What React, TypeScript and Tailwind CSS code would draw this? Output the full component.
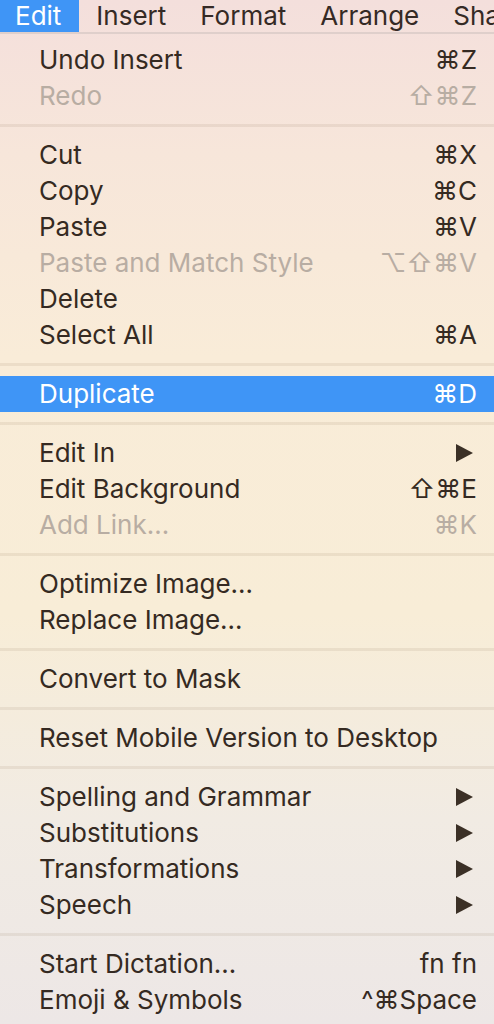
import React from "react";

type Item = {
  label: string
  shortcut?: string
  disabled?: boolean
  active?: boolean
  submenu?: boolean
}

const GROUPS: Item[][] = [
  [
    { label: "Undo Insert", shortcut: "⌘Z" },
    { label: "Redo", shortcut: "⇧⌘Z", disabled: true },
  ],
  [
    { label: "Cut", shortcut: "⌘X" },
    { label: "Copy", shortcut: "⌘C" },
    { label: "Paste", shortcut: "⌘V" },
    { label: "Paste and Match Style", shortcut: "⌥⇧⌘V", disabled: true },
    { label: "Delete" },
    { label: "Select All", shortcut: "⌘A" },
  ],
  [{ label: "Duplicate", shortcut: "⌘D", active: true }],
  [
    { label: "Edit In", submenu: true },
    { label: "Edit Background", shortcut: "⇧⌘E" },
    { label: "Add Link…", shortcut: "⌘K", disabled: true },
  ],
  [
    { label: "Optimize Image…" },
    { label: "Replace Image…" },
  ],
  [{ label: "Convert to Mask" }],
  [{ label: "Reset Mobile Version to Desktop" }],
  [
    { label: "Spelling and Grammar", submenu: true },
    { label: "Substitutions", submenu: true },
    { label: "Transformations", submenu: true },
    { label: "Speech", submenu: true },
  ],
  [
    { label: "Start Dictation…", shortcut: "fn fn" },
    { label: "Emoji & Symbols", shortcut: "^⌘Space" },
  ],
]

const MENUBAR = ["Edit", "Insert", "Format", "Arrange", "Sha"]

function Arrow({ active }: { active?: boolean }) {
  return (
    <svg width="17" height="18" viewBox="0 0 17 18" className="mr-[4px]">
      <polygon points="0,0 17,9 0,18" fill={active ? "#ffffff" : "#3b3026"} />
    </svg>
  )
}

function MenuRow({ item }: { item: Item }) {
  const color = item.active
    ? "text-white"
    : item.disabled
      ? "text-[#b8ada3]"
      : "text-[#352a22]"

  return (
    <div
      className={`flex h-[36px] items-center justify-between pl-[39px] pr-[17px] ${color} ${item.active ? "bg-[#3f95f6]" : ""}`}
    >
      <span>{item.label}</span>
      {item.submenu ? (
        <Arrow active={item.active} />
      ) : (
        item.shortcut && <span>{item.shortcut}</span>
      )}
    </div>
  )
}

export default function App() {
  return (
    <div
      className="h-[1024px] w-[494px] overflow-hidden bg-[linear-gradient(180deg,#f4dfdc_0%,#f7e6da_15%,#f9ecd8_35%,#f8edd7_60%,#f1ebe3_80%,#ede7e6_100%)] text-[26px] leading-none"
      style={{ fontFamily: "Inter, 'DejaVu Sans', sans-serif" }}
    >
      {/* Menu bar */}
      <div className="flex h-[34px] items-center overflow-hidden whitespace-nowrap border-b-[2px] border-[#dfcfcb] text-[#352a25]">
        {MENUBAR.map((name, i) => (
          <div
            key={name}
            className={`flex h-full shrink-0 items-center px-[17px] ${i === 0 ? "bg-[#3f95f6] pl-[15px] pr-[18px] text-white" : ""}`}
          >
            {name}
          </div>
        ))}
      </div>

      {/* Menu items */}
      <div className="flex flex-col pt-[8px]">
        {GROUPS.map((group, gi) => (
          <div key={gi} className="flex flex-col">
            {gi > 0 && (
              <div className="flex h-[23px] items-center">
                <div className="h-[3px] w-full bg-[#6b4a2a]/[0.09]" />
              </div>
            )}
            {group.map((item) => (
              <MenuRow key={item.label} item={item} />
            ))}
          </div>
        ))}
      </div>
    </div>
  )
}
